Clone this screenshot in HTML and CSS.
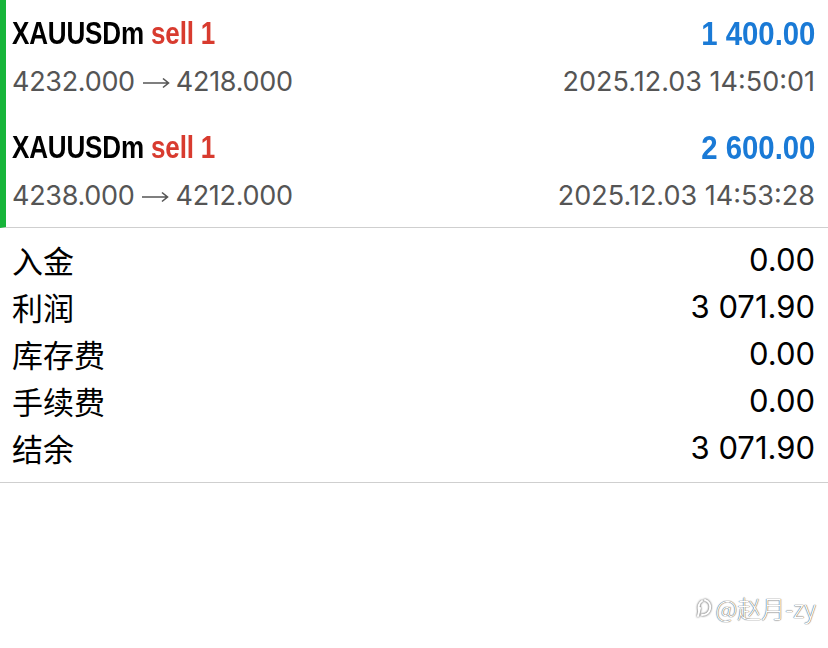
FILE: index.html
```html
<!DOCTYPE html>
<html lang="zh">
<head>
<meta charset="utf-8">
<link rel="stylesheet" href="styles.css">
</head>
<body>
<div class="trades">
  <div class="trade">
    <div class="line title-line">
      <span class="title">XAUUSDm <span class="sell">sell 1</span></span>
      <span class="profit">1 400.00</span>
    </div>
    <div class="line sub-line">
      <span class="prices">4232.000<svg class="arrow" width="28" height="12" viewBox="0 0 28 12"><path d="M1 6 H26 M21 1.5 L26.5 6 L21 10.5" fill="none" stroke="#555" stroke-width="1.6"/></svg>4218.000</span>
      <span>2025.12.03 14:50:01</span>
    </div>
  </div>
  <div class="trade">
    <div class="line title-line">
      <span class="title">XAUUSDm <span class="sell">sell 1</span></span>
      <span class="profit">2 600.00</span>
    </div>
    <div class="line sub-line">
      <span class="prices">4238.000<svg class="arrow" width="28" height="12" viewBox="0 0 28 12"><path d="M1 6 H26 M21 1.5 L26.5 6 L21 10.5" fill="none" stroke="#555" stroke-width="1.6"/></svg>4212.000</span>
      <span>2025.12.03 14:53:28</span>
    </div>
  </div>
</div>
<div class="summary">
  <div class="row"><span class="label">入金</span><span class="value">0.00</span></div>
  <div class="row"><span class="label">利润</span><span class="value">3 071.90</span></div>
  <div class="row"><span class="label">库存费</span><span class="value">0.00</span></div>
  <div class="row"><span class="label">手续费</span><span class="value">0.00</span></div>
  <div class="row"><span class="label">结余</span><span class="value">3 071.90</span></div>
</div>
<div class="watermark">
  <svg class="wm-icon" width="18" height="24" viewBox="0 0 18 24"><path d="M7 5 C4 7 3 11 4 15 M5 12 L3 20 M10 4 C14 5 16 9 15 13 C14 17 11 19 7 19" fill="none" stroke="#fff" stroke-width="2" stroke-linecap="round"/></svg>
  <span>@赵月-zy</span>
</div>
</body>
</html>
```
FILE: styles.css
```css
html, body {
  margin: 0;
  padding: 0;
  background: #fff;
}
body {
  width: 828px;
  height: 648px;
  position: relative;
  overflow: hidden;
  font-family: "Inter", "Noto Sans CJK SC", sans-serif;
  color: #000;
}
.trades {
  border-left: 6px solid #17b53a;
  border-bottom: 1px solid #cfcfcf;
  padding-left: 6px;
  padding-right: 13px;
}
.trade {
  display: flex;
  flex-direction: column;
  gap: 12px;
  padding: 14px 0 15px;
}
.trade + .trade { padding-top: 15px; }
.line {
  display: flex;
  justify-content: space-between;
  align-items: center;
}
.title-line {
  height: 40px;
  font-family: "Liberation Sans", sans-serif;
  font-weight: bold;
  line-height: 40px;
}
.title {
  display: inline-block;
  font-size: 31px;
  transform: scaleX(0.84);
  transform-origin: left center;
  letter-spacing: -0.2px;
}
.sell { color: #d83b2f; }
.profit {
  display: inline-block;
  color: #1a7ad6;
  font-size: 33px;
  transform: scaleX(0.89);
  transform-origin: right center;
}
.sub-line {
  height: 32px;
  font-size: 27px;
  line-height: 32px;
  color: #555;
}
.prices {
  display: flex;
  align-items: center;
  letter-spacing: -0.3px;
}
.arrow {
  margin: 2px 6px 0 7px;
}
.summary {
  padding: 8px 13px 11px 12px;
  border-bottom: 1px solid #cfcfcf;
}
.row {
  display: flex;
  justify-content: space-between;
  align-items: center;
  height: 47px;
  line-height: 47px;
}
.label {
  font-family: "Noto Sans CJK SC", sans-serif;
  font-size: 31px;
}
.value {
  font-size: 31px;
}
.watermark {
  position: absolute;
  right: 12px;
  top: 590px;
  display: flex;
  align-items: center;
  gap: 3px;
  font-size: 24px;
  color: #fff;
  text-shadow: 0 0 1px #555, 0 0 1px #555;
  font-family: "Noto Sans CJK SC", sans-serif;
  font-weight: 300;
}
.wm-icon { filter: drop-shadow(0 0 0.8px #333); }
```
